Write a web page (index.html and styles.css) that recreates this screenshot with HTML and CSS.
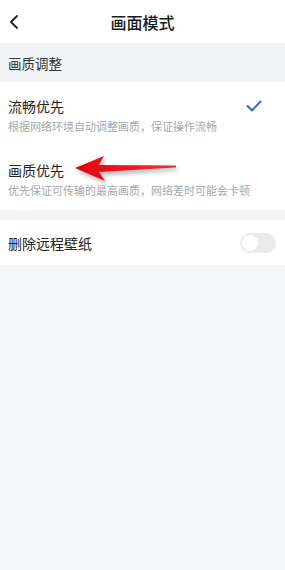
FILE: index.html
```html
<!DOCTYPE html>
<html lang="zh">
<head>
<meta charset="utf-8">
<link rel="stylesheet" href="styles.css">
</head>
<body>
<div class="page">
  <header class="topbar">
    <svg class="back" width="12" height="16" viewBox="0 0 12 16"><path d="M9 2 L3 8 L9 14" fill="none" stroke="#222" stroke-width="1.8" stroke-linecap="round" stroke-linejoin="round"/></svg>
    <div class="title">画面模式</div>
  </header>
  <div class="section-head">画质调整</div>
  <div class="group">
    <div class="item">
      <div class="texts">
        <div class="name">流畅优先</div>
        <div class="desc">根据网络环境自动调整画质，保证操作流畅</div>
      </div>
      <svg class="check" width="16" height="12" viewBox="0 0 16 12"><path d="M1.5 6 L6 10.5 L14.5 1.5" fill="none" stroke="#2e6fb5" stroke-width="2" stroke-linecap="round" stroke-linejoin="round"/></svg>
    </div>
    <div class="item item2">
      <div class="texts">
        <div class="name">画质优先</div>
        <div class="desc">优先保证可传输的最高画质，网络差时可能会卡顿</div>
      </div>
      <svg class="arrow" width="110" height="34" viewBox="0 0 110 34">
        <defs>
          <linearGradient id="g" x1="0" y1="0" x2="1" y2="0">
            <stop offset="0" stop-color="#e8000c"/>
            <stop offset="1" stop-color="#f0303a"/>
          </linearGradient>
          <filter id="s" x="-10%" y="-30%" width="130%" height="170%">
            <feDropShadow dx="2" dy="3" stdDeviation="2" flood-color="#000" flood-opacity="0.3"/>
          </filter>
        </defs>
        <path d="M3 16 L32 4 L27 13 L104 13.5 L104 15.5 L27 20 L33 29 Z" fill="url(#g)" filter="url(#s)"/>
      </svg>
    </div>
  </div>
  <div class="gap"></div>
  <div class="group">
    <div class="item item3">
      <div class="name">删除远程壁纸</div>
      <div class="toggle"><div class="knob"></div></div>
    </div>
  </div>
</div>
</body>
</html>
```

FILE: styles.css
```css
html, body {
  margin: 0;
  padding: 0;
  background: #f4f7f9;
}
body {
  font-family: "Noto Sans CJK SC", "Noto Sans", sans-serif;
  width: 285px;
  height: 570px;
  overflow: hidden;
}
.page {
  display: flex;
  flex-direction: column;
}
.topbar {
  position: relative;
  height: 43px;
  background: #fff;
  display: flex;
  align-items: center;
  justify-content: center;
}
.back {
  position: absolute;
  left: 8px;
  top: 14px;
}
.title {
  font-size: 16px;
  font-weight: 500;
  color: #1a1a1a;
}
.section-head {
  height: 39px;
  display: flex;
  align-items: center;
  padding-left: 8px;
  font-size: 13.5px;
  color: #333;
  background: #f1f5f7;
}
.group {
  background: #fff;
}
.item {
  position: relative;
  display: flex;
  align-items: center;
  justify-content: space-between;
  padding: 0 8px;
  height: 64px;
}
.texts {
  display: flex;
  flex-direction: column;
  gap: 4px;
  padding-top: 2px;
}
.name {
  font-size: 14px;
  color: #222;
  line-height: 18px;
}
.desc {
  font-size: 11px;
  color: #a4a8ab;
  line-height: 14px;
}
.check {
  margin-right: 15px;
  margin-top: -16px;
}
.arrow {
  position: absolute;
  left: 72px;
  top: 6px;
}
.gap {
  height: 10px;
  background: #f2f4f5;
}
.item3 {
  height: 45px;
}
.toggle {
  width: 36px;
  height: 20px;
  border-radius: 10px;
  background: #ebebeb;
  position: relative;
  margin-right: 1px;
}
.knob {
  position: absolute;
  left: 2px;
  top: 2px;
  width: 16px;
  height: 16px;
  border-radius: 50%;
  background: #fff;
}
```
